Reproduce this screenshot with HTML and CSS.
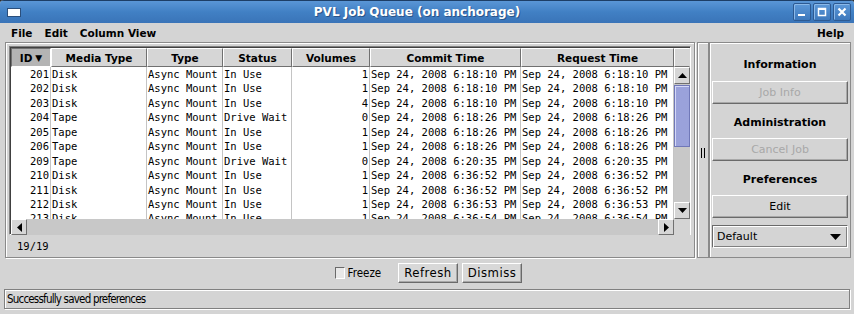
FILE: index.html
```html
<!DOCTYPE html>
<html lang="en">
<head>
    <meta charset="UTF-8">
    <title>PVL Job Queue</title>
    <link rel="stylesheet" href="styles.css">
</head>
<body>
    <div class="window">
        <div class="titlebar">
            <div class="win-icon"></div>
            <div class="win-title">PVL Job Queue (on anchorage)</div>
            <div class="win-buttons">
                <div class="win-btn">
                    <svg width="12" height="12" viewBox="0 0 12 12"><rect x="2" y="8" width="7" height="2" fill="#fff"/></svg>
                </div>
                <div class="win-btn">
                    <svg width="12" height="12" viewBox="0 0 12 12"><rect x="2.5" y="2.5" width="7" height="7" fill="none" stroke="#fff" stroke-width="1.5"/><rect x="2" y="2" width="8" height="2" fill="#fff"/></svg>
                </div>
                <div class="win-btn">
                    <svg width="12" height="12" viewBox="0 0 12 12"><path d="M2.5 2.5 L9.5 9.5 M9.5 2.5 L2.5 9.5" stroke="#fff" stroke-width="2.2"/></svg>
                </div>
            </div>
        </div>

        <div class="menubar">
            <span>File</span>
            <span>Edit</span>
            <span>Column View</span>
            <span class="menu-help">Help</span>
        </div>

        <div class="main">
            <div class="table-panel">
                <div class="table-box">
                    <div class="thead">
                        <div class="th sorted">ID <span class="sort-arrow">&#9660;</span></div>
                        <div class="th">Media Type</div>
                        <div class="th">Type</div>
                        <div class="th">Status</div>
                        <div class="th">Volumes</div>
                        <div class="th">Commit Time</div>
                        <div class="th">Request Time</div>
                        <div class="th corner"></div>
                    </div>
                    <div class="tbody-wrap">
                        <div class="tbody" id="rows"></div>
                        <div class="vscroll">
                            <div class="arrow-btn"><svg width="9" height="5" viewBox="0 0 9 5"><path d="M0 5 L4.5 0 L9 5 Z" fill="#000"/></svg></div>
                            <div class="vtrack">
                                <div class="vthumb"></div>
                            </div>
                            <div class="arrow-btn"><svg width="9" height="5" viewBox="0 0 9 5"><path d="M0 0 L4.5 5 L9 0 Z" fill="#000"/></svg></div>
                        </div>
                    </div>
                    <div class="hscroll-row">
                        <div class="hscroll">
                            <div class="arrow-btn"><svg width="5" height="9" viewBox="0 0 5 9"><path d="M5 0 L0 4.5 L5 9 Z" fill="#000"/></svg></div>
                            <div class="htrack"></div>
                            <div class="arrow-btn"><svg width="5" height="9" viewBox="0 0 5 9"><path d="M0 0 L5 4.5 L0 9 Z" fill="#000"/></svg></div>
                        </div>
                        <div class="scroll-corner"></div>
                    </div>
                </div>
                <div class="row-count">19/19</div>
            </div>

            <div class="splitter"><span class="grip"></span></div>

            <div class="side-panel">
                <div class="side-title first">Information</div>
                <button class="side-btn" disabled>Job Info</button>
                <div class="side-title">Administration</div>
                <button class="side-btn" disabled>Cancel Job</button>
                <div class="side-title">Preferences</div>
                <button class="side-btn">Edit</button>
                <div class="combo">
                    <span>Default</span>
                    <svg width="11" height="6" viewBox="0 0 11 6"><path d="M0 0 L5.5 6 L11 0 Z" fill="#000"/></svg>
                </div>
            </div>
        </div>

        <div class="bottom-bar">
            <label class="freeze"><span class="checkbox"></span>Freeze</label>
            <button class="small-btn">Refresh</button>
            <button class="small-btn">Dismiss</button>
        </div>

        <div class="status-bar">Successfully saved preferences</div>
    </div>

    <script>
        const jobs = [
            [201, 'Disk', 'Async Mount', 'In Use', 1, '6:18:10'],
            [202, 'Disk', 'Async Mount', 'In Use', 1, '6:18:10'],
            [203, 'Disk', 'Async Mount', 'In Use', 4, '6:18:10'],
            [204, 'Tape', 'Async Mount', 'Drive Wait', 0, '6:18:26'],
            [205, 'Tape', 'Async Mount', 'In Use', 1, '6:18:26'],
            [206, 'Tape', 'Async Mount', 'In Use', 1, '6:18:26'],
            [209, 'Tape', 'Async Mount', 'Drive Wait', 0, '6:20:35'],
            [210, 'Disk', 'Async Mount', 'In Use', 1, '6:36:52'],
            [211, 'Disk', 'Async Mount', 'In Use', 1, '6:36:52'],
            [212, 'Disk', 'Async Mount', 'In Use', 1, '6:36:53'],
            [213, 'Disk', 'Async Mount', 'In Use', 1, '6:36:54'],
        ];

        const rows = document.getElementById('rows');
        jobs.forEach(job => {
            const time = `Sep 24, 2008 ${job[5]} PM`;
            const cells = [job[0], job[1], job[2], job[3], job[4], time, time];
            const row = document.createElement('div');
            row.className = 'tr';
            cells.forEach((value, i) => {
                const td = document.createElement('div');
                td.className = 'td' + (i === 0 || i === 4 ? ' num' : '');
                td.textContent = value;
                row.appendChild(td);
            });
            rows.appendChild(row);
        });
    </script>
</body>
</html>
```

FILE: styles.css
```css
body {
    margin: 0;
    width: 854px;
    height: 314px;
    overflow: hidden;
    background: #2c2c2c;
    font-family: "DejaVu Sans", sans-serif;
}

.window {
    width: 854px;
    height: 314px;
    display: flex;
    flex-direction: column;
    background: #d4d4d4;
    border-radius: 4px 4px 0 0;
    overflow: hidden;
}

/* title bar */
.titlebar {
    height: 22px;
    flex: none;
    display: flex;
    align-items: center;
    background: linear-gradient(#5a96d6, #4180c4 50%, #3a74b8);
    border-top: 1px solid #1d3e66;
}

.win-icon {
    width: 12px;
    height: 7px;
    margin-left: 7px;
    background: #fff;
    border: 1px solid #2b4f7c;
}

.win-title {
    flex: 1;
    text-align: center;
    color: #fff;
    font-weight: bold;
    font-size: 12px;
    text-shadow: 1px 1px 0 #2a5488;
    padding-left: 20px;
}

.win-buttons {
    display: flex;
    gap: 2px;
    margin-right: 3px;
}

.win-btn {
    width: 16px;
    height: 16px;
    display: flex;
    align-items: center;
    justify-content: center;
    border: 1px solid #2d5a92;
    border-radius: 2px;
    background: linear-gradient(#5c98d8, #3d78bc);
    box-shadow: inset 1px 1px 0 #8ab8e8;
}

/* menu bar */
.menubar {
    height: 19px;
    flex: none;
    display: flex;
    align-items: center;
    gap: 12px;
    padding: 0 10px 0 11px;
    font-size: 10.5px;
    font-weight: bold;
    color: #000;
}

.menu-help {
    margin-left: auto;
}

/* main area */
.main {
    flex: none;
    height: 216px;
    display: flex;
    padding: 0 3px 0 5px;
}

.table-panel {
    width: 682px;
    border: 1px solid #8a8a8a;
    box-shadow: inset 1px 1px 0 #fff, 1px 1px 0 #fff;
    padding: 3px 3px 0 3px;
    display: flex;
    flex-direction: column;
}

.table-box {
    border: 1px solid #808080;
    border-right-color: #fff;
    border-bottom-color: #fff;
    box-shadow: inset 1px 1px 0 #404040;
    padding: 1px 0 0 1px;
    height: 186px;
    display: flex;
    flex-direction: column;
    background: #d4d4d4;
}

.thead {
    display: grid;
    grid-template-columns: 40px 96px 76px 69px 78px 151px 153px 16px;
    height: 19px;
    flex: none;
}

.th {
    font-size: 10.5px;
    font-weight: bold;
    display: flex;
    align-items: center;
    justify-content: center;
    border: 1px solid;
    border-color: #fff #707070 #707070 #fff;
    background: #d6d6d6;
    white-space: nowrap;
}

.th.sorted {
    background: #b4b4b4;
    border-color: #707070 #fff #fff #707070;
}

.sort-arrow {
    font-size: 9px;
    margin-left: 3px;
}

.th.corner {
    border-right-color: #d6d6d6;
}

.tbody-wrap {
    flex: none;
    height: 152px;
    display: flex;
}

.tbody {
    width: 663px;
    background: #fff;
    overflow: hidden;
}

.tr {
    display: grid;
    grid-template-columns: 40px 96px 76px 69px 78px 151px 153px;
    height: 14.45px;
}

.td {
    font-family: "DejaVu Sans Mono", monospace;
    font-size: 10.5px;
    line-height: 14.45px;
    padding-left: 1px;
    border-right: 1px solid #c4c4c4;
    white-space: nowrap;
    overflow: hidden;
}

.td.num {
    text-align: right;
    padding: 0 1px 0 0;
}

.vscroll {
    width: 16px;
    display: flex;
    flex-direction: column;
    background: #d4d4d4;
}

.arrow-btn {
    width: 14px;
    height: 14px;
    flex: none;
    display: flex;
    align-items: center;
    justify-content: center;
    background: #d6d6d6;
    border: 1px solid;
    border-color: #fff #707070 #707070 #fff;
}

.vscroll .arrow-btn {
    height: 15px;
}

.vtrack {
    flex: 1;
    background: #c8c8c8;
}

.vthumb {
    height: 60px;
    margin: 1px 0;
    border: 1px solid #7078b8;
    background: #aab0e4 radial-gradient(#8890d0 0.6px, transparent 0.8px) 0 0 / 2px 2px;
    box-shadow: inset 1px 1px 0 #d4d8f8;
}

.hscroll-row {
    display: flex;
    height: 16px;
    flex: none;
}

.hscroll {
    width: 663px;
    display: flex;
}

.htrack {
    flex: 1;
    background: #c8c8c8;
}

.scroll-corner {
    width: 16px;
    background: #d4d4d4;
}

.row-count {
    font-family: "DejaVu Sans Mono", monospace;
    font-size: 10.5px;
    padding: 5px 0 0 8px;
}

/* splitter */
.splitter {
    width: 10px;
    margin-left: 2px;
    border: 1px solid #8a8a8a;
    box-shadow: inset 1px 1px 0 #fff;
    display: flex;
    align-items: center;
    justify-content: center;
    padding-top: 6px;
}

.grip {
    width: 2px;
    height: 10px;
    border-left: 1px solid #000;
    border-right: 1px solid #000;
}

/* side panel */
.side-panel {
    flex: 1;
    border: 1px solid #8a8a8a;
    box-shadow: inset 1px 1px 0 #fff;
    padding: 0 2px;
    display: flex;
    flex-direction: column;
}

.side-title {
    height: 34px;
    display: flex;
    align-items: center;
    justify-content: center;
    font-size: 11px;
    font-weight: bold;
    padding-top: 3px;
    box-sizing: border-box;
}

.side-title.first {
    height: 38px;
    padding-top: 5px;
}

.side-btn {
    height: 23px;
    font-family: "DejaVu Sans", sans-serif;
    font-size: 11px;
    background: #d4d4d4;
    border: 1px solid;
    border-color: #fff #6a6a6a #6a6a6a #fff;
    box-shadow: inset -1px -1px 0 #a8a8a8;
    color: #000;
    padding: 0;
}

.side-btn:disabled {
    color: #a8a8a8;
}

.combo {
    margin-top: 7px;
    height: 23px;
    box-sizing: border-box;
    border: 1px solid;
    border-color: #6a6a6a #fff #fff #6a6a6a;
    box-shadow: inset 1px 1px 0 #fff, inset -1px -1px 0 #808080;
    display: flex;
    align-items: center;
    justify-content: space-between;
    padding: 0 6px 0 4px;
    font-size: 11px;
}

/* bottom bar */
.bottom-bar {
    flex: none;
    height: 29px;
    display: flex;
    align-items: center;
    justify-content: center;
    gap: 4px;
    padding-left: 3px;
    font-family: "Liberation Sans Narrow", "DejaVu Sans Condensed", sans-serif;
    font-size: 11.5px;
}

.freeze {
    display: flex;
    align-items: center;
    gap: 3px;
    margin-right: 13px;
}

.checkbox {
    width: 8px;
    height: 10px;
    border: 1px solid;
    border-color: #6a6a6a #fff #fff #6a6a6a;
    background: #e8e8e8;
}

.small-btn {
    height: 20px;
    padding: 0 5px;
    font-family: "Liberation Sans Narrow", "DejaVu Sans Condensed", sans-serif;
    font-size: 13px;
    letter-spacing: 0.5px;
    background: #d8d8d8;
    border: 1px solid;
    border-color: #fff #6a6a6a #6a6a6a #fff;
    box-shadow: inset -1px -1px 0 #a8a8a8;
    color: #000;
}

/* status bar */
.status-bar {
    flex: none;
    margin: 2px 4px 0;
    height: 20px;
    box-sizing: border-box;
    border: 1px solid #808080;
    box-shadow: inset 1px 1px 0 #fff, 1px 1px 0 #fff;
    display: flex;
    align-items: center;
    padding-left: 2px;
    font-family: "Liberation Sans Narrow", "DejaVu Sans Condensed", sans-serif;
    font-size: 11.5px;
    letter-spacing: -0.8px;
}
```
